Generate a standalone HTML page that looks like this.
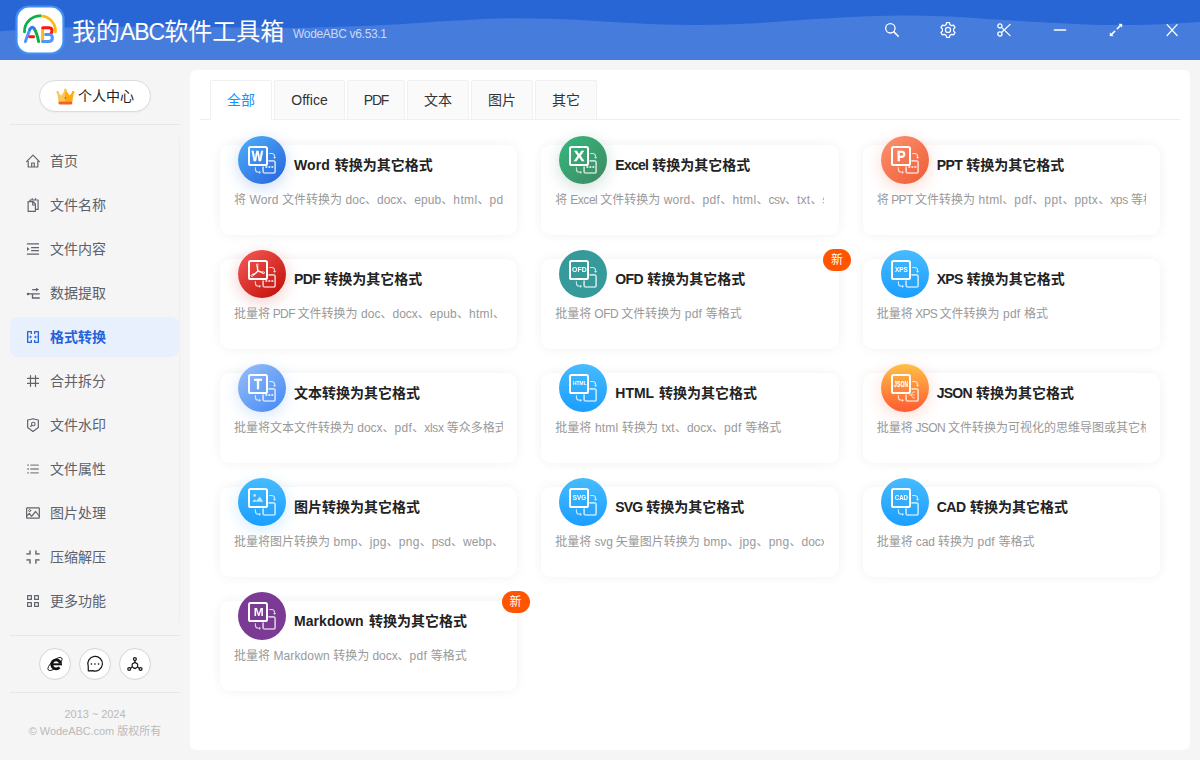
<!DOCTYPE html>
<html lang="zh-CN">
<head>
<meta charset="utf-8">
<title>我的ABC软件工具箱</title>
<style>
*{box-sizing:border-box;margin:0;padding:0}
html,body{width:1200px;height:760px;overflow:hidden}
body{background:#f5f5f5;font-family:"Liberation Sans","Noto Sans CJK SC",sans-serif;font-size:14px;color:#333;position:relative;-webkit-font-smoothing:antialiased}
a{color:inherit;text-decoration:none}
ul{list-style:none}
.hd{position:absolute;left:0;top:0;width:1200px;height:60px;background:#2866d6;overflow:hidden}
.hd .wave{position:absolute;left:0;top:0;width:1200px;height:60px}
.logo{position:absolute;left:0;top:0;width:80px;height:60px}
.logo svg{position:absolute;left:0;top:0;width:80px;height:60px}
.ttl{position:absolute;left:72px;top:13px;height:38px;line-height:38px;font-size:24px;color:#fff;white-space:nowrap}
.ttl b{font-weight:400;font-size:23px;letter-spacing:-1.05px}
.ver{position:absolute;left:293px;top:25px;height:18px;line-height:18px;font-size:12px;color:rgba(255,255,255,.72);white-space:nowrap}
.hb{position:absolute;top:14px;width:32px;height:32px;display:block}
.hb svg{position:absolute;left:8px;top:8px;width:16px;height:16px}
.sb{position:absolute;left:0;top:60px;width:190px;height:700px}
.uc{position:absolute;left:39px;top:20px;width:112px;height:32px;border:1px solid #dcdcdc;border-radius:16px;background:#fff;box-shadow:0 1px 2px rgba(0,0,0,.04)}
.uc svg{position:absolute;left:16px;top:7px;width:19px;height:18px}
.uc span{position:absolute;left:38px;top:0;height:30px;line-height:30px;font-size:14px;color:#222;white-space:nowrap}
.ln{position:absolute;left:10px;width:170px;height:1px;background:#e6e6e6}
.vl{position:absolute;left:179px;top:77px;width:1px;height:486px;background:#efefef}
.nav{position:absolute;left:10px;top:81px;width:169px}
.nav li{position:relative;height:40px;margin-bottom:4px;border-radius:8px;color:#5d6169;font-size:14px;line-height:40px;white-space:nowrap}
.nav li svg{position:absolute;left:15px;top:12px;width:16px;height:16px}
.nav li span{position:absolute;left:40px;top:0}
.nav li.on{background:#e8f0fe;color:#2562d6;font-weight:700}
.rb{position:absolute;top:588px;width:32px;height:32px;border-radius:50%;background:#fff;border:1px solid #d4d4d4}
.rb svg{position:absolute;left:-1px;top:-1px;width:32px;height:32px}
.cp{position:absolute;left:0;width:190px;text-align:center;font-size:11px;line-height:17px;height:17px;color:#bababa;white-space:nowrap}
.pn{position:absolute;left:190px;top:70px;width:1000px;height:680px;background:#fff;border-radius:6px}
.tabs{position:absolute;left:10px;top:10px;width:980px;height:40px;border-bottom:1px solid #efefef}
.tab{position:absolute;top:0;height:40px;line-height:38px;text-align:center;font-size:14px;color:#333;background:#fafafa;border:1px solid #f0f0f0;border-radius:2px 2px 0 0;white-space:nowrap}
.tab.on{background:#fff;color:#1890ff;border-bottom-color:#fff}
.card{position:absolute;width:297.333px;height:90px;background:#fff;border-radius:10px;box-shadow:0 0 12px rgba(0,0,0,.06)}
.ic{position:absolute;left:18px;top:-9px;width:48px;height:48px;border-radius:50%}
.ic svg{position:absolute;left:0;top:0;width:48px;height:48px;overflow:visible;will-change:transform}
.ic svg text{font-family:"Liberation Sans",sans-serif;font-weight:700;fill:#fff;text-anchor:middle;stroke:#fff}
.ct{position:absolute;left:74px;top:9px;height:22px;line-height:22px;font-size:14px;font-weight:700;color:#222;white-space:nowrap}
.cd{position:absolute;left:14px;top:45px;width:269px;height:20px;line-height:20px;font-size:12px;color:#999;white-space:nowrap;overflow:hidden}
.bdg{position:absolute;right:-12.3px;top:-10px;width:28px;height:22px;line-height:23px;border-radius:11px;background:#ff5500;color:#fff;font-size:12px;text-align:center}
</style>
</head>
<body>
<div class="hd"><svg class="wave" viewBox="0 0 1200 60" preserveAspectRatio="none"><path d="M0.0 31.2 C6.7 30.8 26.7 29.7 40.0 29.0 C53.3 28.3 61.7 27.4 80.0 27.0 C98.3 26.6 126.7 26.8 150.0 26.8 C173.3 26.9 196.7 27.1 220.0 27.3 C243.3 27.5 270.0 28.1 290.0 28.0 C310.0 27.9 321.7 27.4 340.0 26.8 C358.3 26.2 381.7 25.2 400.0 24.2 C418.3 23.2 433.3 21.8 450.0 20.8 C466.7 19.8 483.3 18.7 500.0 18.4 C516.7 18.1 533.3 18.3 550.0 18.8 C566.7 19.3 583.3 20.4 600.0 21.3 C616.7 22.2 633.3 23.4 650.0 24.0 C666.7 24.6 683.3 25.1 700.0 25.0 C716.7 24.9 733.3 24.3 750.0 23.5 C766.7 22.7 783.3 21.1 800.0 20.0 C816.7 18.9 833.3 17.8 850.0 17.0 C866.7 16.2 883.3 15.6 900.0 15.5 C916.7 15.4 933.3 15.8 950.0 16.5 C966.7 17.2 983.3 18.8 1000.0 19.8 C1016.7 20.9 1033.3 22.0 1050.0 22.8 C1066.7 23.6 1083.3 24.6 1100.0 24.9 C1116.7 25.2 1133.3 25.2 1150.0 24.7 C1166.7 24.2 1191.7 22.4 1200.0 22.0 L1200 60 L0 60 Z" fill="#467cdb"/></svg>
<div class="logo"><svg viewBox="0 0 80 60" fill="none" stroke-linecap="round" stroke-linejoin="round">
<rect x="15.4" y="5.4" width="49.2" height="49.2" rx="13.5" fill="#3f8ff5"/>
<rect x="17.6" y="7.6" width="44.8" height="44.8" rx="11.5" fill="#fff"/>
<path d="M41 15.85 A15.5 15.5 0 0 1 55.5 31.8" stroke="#ffba12" stroke-width="2.8"/>
<path d="M24.5 31.8 A15.5 15.5 0 0 1 41 15.85" stroke="#0eb04a" stroke-width="2.8" stroke-linecap="butt"/><path d="M24.5 31.8 v.1" stroke="#0eb04a" stroke-width="2.8"/>
<path d="M38.6 41.6 Q37 33 34.2 28.6" stroke="#0eb04a" stroke-width="3"/>
<path d="M25.4 41.6 L29.8 29.4" stroke="#4d95fa" stroke-width="3"/>
<path d="M29.8 29.4 Q32 25.4 34.2 28.6" stroke="#2f7cf0" stroke-width="3"/>
<path d="M29.8 36.8 L33.6 36.8" stroke="#fb1613" stroke-width="3"/>
<path d="M42.6 28.4 L42.6 41.4" stroke="#ffba12" stroke-width="3"/>
<path d="M42.8 27.7 H48.6 Q52 27.7 52 30.6 Q52 32.4 51 33.4" stroke="#fb1613" stroke-width="3"/>
<path d="M45.6 34.4 H49.4 Q52.4 34.8 52.4 37.8 Q52.4 41.5 48.4 41.5 H42.8" stroke="#4d95fa" stroke-width="3"/>
</svg></div>
<div class="ttl">我的<b>ABC</b>软件工具箱</div><div class="ver"><span style="letter-spacing:-0.319px">WodeABC v6.53.1</span></div>
<a class="hb" style="left:876px"><svg viewBox="0 0 16 16"><circle cx="6.35" cy="6.3" r="4.7" fill="none" stroke="#fff" stroke-width="1.3"/><path d="M9.9 9.9 L14.3 14.3" stroke="#fff" stroke-width="1.5" stroke-linecap="round"/></svg></a><a class="hb" style="left:932px"><svg viewBox="0 0 16 16"><path d="M6.14 2.61 L6.58 0.69 L9.42 0.69 L9.86 2.61 L11.74 3.70 L13.62 3.11 L15.04 5.57 L13.60 6.91 L13.60 9.09 L15.04 10.43 L13.62 12.89 L11.74 12.30 L9.86 13.39 L9.42 15.31 L6.58 15.31 L6.14 13.39 L4.26 12.30 L2.38 12.89 L0.96 10.43 L2.40 9.09 L2.40 6.91 L0.96 5.57 L2.38 3.11 L4.26 3.70 Z" fill="none" stroke="#fff" stroke-width="1.25" stroke-linejoin="round"/><circle cx="8" cy="7.9" r="2.55" fill="none" stroke="#fff" stroke-width="1.2"/></svg></a><a class="hb" style="left:988px"><svg viewBox="0 0 16 16"><circle cx="3.9" cy="3.9" r="2.1" fill="none" stroke="#fff" stroke-width="1.3"/><circle cx="3.9" cy="12" r="2.1" fill="none" stroke="#fff" stroke-width="1.3"/><path d="M5.5 5.4 L14.1 13.6 M5.5 10.5 L14.1 2.4" stroke="#fff" stroke-width="1.3" stroke-linecap="round"/></svg></a><a class="hb" style="left:1044px"><svg viewBox="0 0 16 16"><path d="M2.5 8 H13.5" stroke="#fff" stroke-width="1.7" stroke-linecap="round"/></svg></a><a class="hb" style="left:1100px"><svg viewBox="0 0 16 16"><path d="M9.3 6.7 L12.6 3.4 M6.7 9.3 L3.4 12.6" stroke="#fff" stroke-width="1.6" stroke-linecap="round"/><path d="M10.8 2 H14 V5.2 Z M2 10.8 V14 H5.2 Z" fill="#fff" stroke="#fff" stroke-width=".4" stroke-linejoin="round"/></svg></a><a class="hb" style="left:1156px"><svg viewBox="0 0 16 16"><path d="M3.1 2.6 L13.1 13.5 M13.1 2.6 L3.1 13.5" stroke="#fff" stroke-width="1.25" stroke-linecap="round"/></svg></a></div>
<div class="sb">
<div class="uc"><svg viewBox="0 0 19 18"><path d="M1.6 4.4 L5.4 8 L9.4 2.2 L13.4 8 L17.2 4.4 L16 13.2 H2.8 Z" fill="#fdc55a" stroke="#fdc55a" stroke-width=".8" stroke-linejoin="round"/><path d="M9.4 2.2 L13.4 8 L17.2 4.4 L16 13.2 H9.4 Z" fill="#fcab18" stroke="#fcab18" stroke-width=".8" stroke-linejoin="round"/><circle cx="1.7" cy="4.3" r="1.3" fill="#fdc55a"/><circle cx="9.4" cy="2" r="1.5" fill="#fdc55a"/><circle cx="17.1" cy="4.3" r="1.3" fill="#fcab18"/><path d="M2.6 13.6 H16.2 V15.2 Q16.2 16.6 14.8 16.6 H4 Q2.6 16.6 2.6 15.2 Z" fill="#f4641c"/><circle cx="9.4" cy="9.9" r=".8" fill="#f0442a"/></svg><span>个人中心</span></div>
<div class="ln" style="top:64px"></div>
<div class="vl"></div>
<ul class="nav">
<li><svg style="color:#60646c" viewBox="0 0 16 16" fill="none" stroke="currentColor" stroke-width="1.2" stroke-linejoin="round" stroke-linecap="round"><path d="M1.6 8.6 L8 2.2 L14.4 8.6 M3.2 8.4 V14 H12.8 V8.4 M6.7 14 V10 H9.3 V14"/></svg><span>首页</span></li>
<li><svg style="color:#60646c" viewBox="0 0 16 16" fill="none" stroke="currentColor" stroke-width="1.2" stroke-linejoin="round" stroke-linecap="round"><path d="M3.1 4.7 H8.2 L10.4 7 V14.3 H3.1 Z M7.7 4.9 V8 H10.2 M5 4.4 V3 H13.1 V12.4 H10.7 M7.2 1.7 V3 M10.4 1.7 V3"/></svg><span>文件名称</span></li>
<li><svg style="color:#60646c" viewBox="0 0 16 16" fill="none" stroke="currentColor" stroke-width="1.25"><path d="M1.9 2.95 H14 M6.1 6.5 H14 M6.1 9.55 H14 M1.9 13 H14"/><path d="M2 5.9 L4.5 8 L2 10.1 Z" fill="currentColor" stroke="none"/></svg><span>文件内容</span></li>
<li><svg style="color:#60646c" viewBox="0 0 16 16" fill="none" stroke="currentColor" stroke-width="1.3"><path d="M7.2 4.6 H11.4 M3 8.9 H14.8 M7.5 8.9 V13 H14.8"/><path d="M11 2.7 L14 4.6 L11 6.5 Z" fill="currentColor" stroke="none"/><circle cx="3" cy="8.9" r="1.25" fill="currentColor" stroke="none"/></svg><span>数据提取</span></li>
<li class="on"><svg style="color:#2465d8" viewBox="0 0 16 16" fill="none" stroke="currentColor" stroke-width="1.35" stroke-linejoin="round"><path d="M6.35 4.9 V2.65 H2.65 V13.35 H6.35 V11.1 M9.65 4.9 V2.65 H13.35 V13.35 H9.65 V11.1"/><path d="M3.2 7.95 H5.4 M10.6 7.95 H12.8" stroke-width="1.1" stroke-opacity=".75"/><path d="M5.1 6.3 L7 7.95 L5.1 9.6 Z M10.9 6.3 L9 7.95 L10.9 9.6 Z" fill="currentColor" stroke="none"/></svg><span>格式转换</span></li>
<li><svg style="color:#60646c" viewBox="0 0 16 16" fill="none" stroke="currentColor" stroke-width="1.2" stroke-linejoin="round" stroke-linecap="round"><path d="M5.5 2.5 V13.4 M10.5 2.5 V13.4 M2.5 5.45 H13.5 M2.5 10.45 H13.5"/></svg><span>合并拆分</span></li>
<li><svg style="color:#60646c" viewBox="0 0 16 16" fill="none" stroke="currentColor" stroke-width="1.2" stroke-linejoin="round" stroke-linecap="round"><path d="M2.65 3 Q5.5 2.5 8 1.7 Q10.5 2.5 13.35 3 V10.6 L8 14.4 L2.65 10.6 Z"/><circle cx="8.3" cy="7" r="1.8" stroke-width="1.1"/><path d="M7 8.3 L5.5 9.5" stroke-width="1.1"/></svg><span>文件水印</span></li>
<li><svg style="color:#60646c" viewBox="0 0 16 16" fill="none" stroke="#85888e" stroke-width="1.4"><path d="M5.3 4.1 H13.8 M5.3 8 H13.8 M5.3 11.9 H13.8 M2.2 4.1 H4 M2.2 8 H4 M2.2 11.9 H4"/></svg><span>文件属性</span></li>
<li><svg style="color:#60646c" viewBox="0 0 16 16" fill="none" stroke="currentColor" stroke-width="1.2" stroke-linejoin="round" stroke-linecap="round"><rect x="1.6" y="2.8" width="12.7" height="10.4" rx=".5"/><path d="M1.9 10.9 L4.3 8.4 L6.6 11.3 L10.6 6.5 L14.1 11"/><circle cx="4.7" cy="5.6" r="1" stroke-width="1"/></svg><span>图片处理</span></li>
<li><svg style="color:#60646c" viewBox="0 0 16 16" fill="none" stroke="#7c7f86" stroke-width="1.8" stroke-linecap="round" stroke-linejoin="round"><path d="M2.1 4.9 H5 V2.1 M10.9 2.1 V4.9 H13.9 M2.1 10.9 H5 V13.9 M10.9 13.9 V10.9 H13.9"/></svg><span>压缩解压</span></li>
<li><svg style="color:#60646c" viewBox="0 0 16 16" fill="none" stroke="currentColor" stroke-width="1.2" stroke-linejoin="round"><rect x="2.6" y="2.6" width="3.8" height="3.8"/><rect x="9.6" y="2.6" width="3.8" height="3.8"/><rect x="2.6" y="9.6" width="3.8" height="3.8"/><rect x="9.6" y="9.6" width="3.8" height="3.8"/></svg><span>更多功能</span></li>
</ul>
<div class="ln" style="top:575px"></div>
<a class="rb" style="left:39px"><svg viewBox="0 0 32 32"><ellipse cx="16" cy="16" rx="9" ry="3.5" fill="none" stroke="#1a1a1a" stroke-width=".9" transform="rotate(-42 16 16)"/><circle cx="17.1" cy="16" r="5.2" fill="#fff"/><path d="M20.5 19.4 A4.5 4.5 0 1 1 21.6 15.6" fill="none" stroke="#111" stroke-width="2.9"/><path d="M12.8 16.3 H23" stroke="#111" stroke-width="2"/></svg></a><a class="rb" style="left:79px"><svg viewBox="0 0 32 32"><path d="M9.24 18.2 A7.3 7.3 0 1 1 13.6 22.56 L9.3 22.8 Z" fill="none" stroke="#1a1a1a" stroke-width="1.25" stroke-linejoin="round"/><path d="M11.8 16 h1.3 M15.3 16 h1.3 M18.9 16 h1.3" stroke="#1a1a1a" stroke-width="1.5"/></svg></a><a class="rb" style="left:119px"><svg viewBox="0 0 32 32" fill="none" stroke="#1a1a1a" stroke-width="1.25"><path d="M15.9 14.4 L18.6 15.95 V19.05 L15.9 20.6 L13.2 19.05 V15.95 Z" stroke-linejoin="round"/><circle cx="15.9" cy="11.1" r="1.45"/><circle cx="10.2" cy="21" r="1.45"/><circle cx="21.6" cy="21" r="1.45"/><path d="M15.9 12.6 V14.3 M13.1 19.2 L11.5 20.2 M18.7 19.2 L20.3 20.2"/></svg></a>
<div class="ln" style="top:632px"></div>
<div class="cp" style="top:646px"><span style="letter-spacing:-0.045px">2013 ~ 2024</span></div>
<div class="cp" style="top:663px"><span style="letter-spacing:-0.057px">© WodeABC.com </span>版权所有</div>
</div>
<div class="pn">
<div class="tabs">
<div class="tab on" style="left:10px;width:62px">全部</div><div class="tab" style="left:74px;width:71px"><span style="letter-spacing:0.032px">Office</span></div><div class="tab" style="left:147px;width:58px"><span style="letter-spacing:-1.169px">PDF</span></div><div class="tab" style="left:207px;width:62px">文本</div><div class="tab" style="left:271px;width:62px">图片</div><div class="tab" style="left:335px;width:62px">其它</div>
</div>
<div class="card" style="left:30px;top:75px"><div class="ic" style="box-shadow:0 4px 16px rgba(42,107,224,.24)"><svg viewBox="0 0 48 48"><defs><linearGradient id="g0" x1="0.15" y1="0.1" x2="0.85" y2="0.9"><stop offset="0" stop-color="#4aa6f5"/><stop offset="1" stop-color="#2a6be0"/></linearGradient></defs><circle cx="24" cy="24" r="24" fill="url(#g0)"/><path d="M30.4 24.9 H35.5 a1.6 1.6 0 0 1 1.6 1.6 V35.4 a1.6 1.6 0 0 1 -1.6 1.6 H26.7 a1.6 1.6 0 0 1 -1.6 -1.6 V30.4" fill="none" stroke="#fff" stroke-opacity=".7" stroke-width="1.7"/><path d="M27.4 31 h1.9 M30.4 31 h1.9 M33.4 31 h1.9" stroke="#fff" stroke-opacity=".75" stroke-width="2.2"/><path d="M31.2 17.5 h2.4 q3 0 3 3 v1" fill="none" stroke="#fff" stroke-opacity=".75" stroke-width="1.1"/><path d="M34.9 21.2 h3.4 l-1.7 1.6 z" fill="#fff" fill-opacity=".85"/><path d="M17.4 31.2 v2 q0 3 3 3 h1" fill="none" stroke="#fff" stroke-opacity=".75" stroke-width="1.1"/><path d="M21.2 34.7 v3.2 l1.7 -1.6 z" fill="#fff" fill-opacity=".85"/><rect x="11" y="11" width="18" height="18" rx="1.6" fill="none" stroke="#fff" stroke-width="2"/><text x="19.5" y="24.9" font-size="14" font-weight="700" textLength="11.3" lengthAdjust="spacingAndGlyphs" stroke-width="0.35">W</text></svg></div><div class="ct"><span style="letter-spacing:0.100px">Word</span><span style="letter-spacing:1.000px"> </span>转换为其它格式</div><div class="cd">将<span style="letter-spacing:0.152px"> Word </span>文件转换为<span style="letter-spacing:0.060px"> doc</span>、<span style="letter-spacing:-0.053px">docx</span>、<span style="letter-spacing:0.118px">epub</span>、<span style="letter-spacing:0.353px">html</span>、<span style="letter-spacing:0.287px">pdf </span>等格式</div></div>
<div class="card" style="left:351.333px;top:75px"><div class="ic" style="box-shadow:0 4px 16px rgba(40,120,80,.22)"><svg viewBox="0 0 48 48"><defs><linearGradient id="g1" x1="0.15" y1="0.1" x2="0.85" y2="0.9"><stop offset="0" stop-color="#36b37a"/><stop offset="1" stop-color="#3d8e66"/></linearGradient></defs><circle cx="24" cy="24" r="24" fill="url(#g1)"/><path d="M30.4 24.9 H35.5 a1.6 1.6 0 0 1 1.6 1.6 V35.4 a1.6 1.6 0 0 1 -1.6 1.6 H26.7 a1.6 1.6 0 0 1 -1.6 -1.6 V30.4" fill="none" stroke="#fff" stroke-opacity=".7" stroke-width="1.7"/><path d="M27.4 31 h1.9 M30.4 31 h1.9 M33.4 31 h1.9" stroke="#fff" stroke-opacity=".75" stroke-width="2.2"/><path d="M31.2 17.5 h2.4 q3 0 3 3 v1" fill="none" stroke="#fff" stroke-opacity=".75" stroke-width="1.1"/><path d="M34.9 21.2 h3.4 l-1.7 1.6 z" fill="#fff" fill-opacity=".85"/><path d="M17.4 31.2 v2 q0 3 3 3 h1" fill="none" stroke="#fff" stroke-opacity=".75" stroke-width="1.1"/><path d="M21.2 34.7 v3.2 l1.7 -1.6 z" fill="#fff" fill-opacity=".85"/><rect x="11" y="11" width="18" height="18" rx="1.6" fill="none" stroke="#fff" stroke-width="2"/><text x="20" y="24.9" font-size="14" font-weight="700" textLength="10.2" lengthAdjust="spacingAndGlyphs" stroke-width="0.35">X</text></svg></div><div class="ct"><span style="letter-spacing:-0.767px">Excel</span><span style="letter-spacing:0.233px"> </span>转换为其它格式</div><div class="cd">将<span style="letter-spacing:-0.448px"> Excel </span>文件转换为<span style="letter-spacing:0.175px"> word</span>、<span style="letter-spacing:0.396px">pdf</span>、<span style="letter-spacing:0.353px">html</span>、<span style="letter-spacing:-0.539px">csv</span>、<span style="letter-spacing:0.323px">txt</span>、<span style="letter-spacing:-0.206px">svg </span>等格式</div></div>
<div class="card" style="left:672.667px;top:75px"><div class="ic" style="box-shadow:0 4px 16px rgba(240,98,58,.24)"><svg viewBox="0 0 48 48"><defs><linearGradient id="g2" x1="0.15" y1="0.1" x2="0.85" y2="0.9"><stop offset="0" stop-color="#fb8c6a"/><stop offset="1" stop-color="#f0623a"/></linearGradient></defs><circle cx="24" cy="24" r="24" fill="url(#g2)"/><path d="M30.4 24.9 H35.5 a1.6 1.6 0 0 1 1.6 1.6 V35.4 a1.6 1.6 0 0 1 -1.6 1.6 H26.7 a1.6 1.6 0 0 1 -1.6 -1.6 V30.4" fill="none" stroke="#fff" stroke-opacity=".7" stroke-width="1.7"/><path d="M27.4 31 h1.9 M30.4 31 h1.9 M33.4 31 h1.9" stroke="#fff" stroke-opacity=".75" stroke-width="2.2"/><path d="M31.2 17.5 h2.4 q3 0 3 3 v1" fill="none" stroke="#fff" stroke-opacity=".75" stroke-width="1.1"/><path d="M34.9 21.2 h3.4 l-1.7 1.6 z" fill="#fff" fill-opacity=".85"/><path d="M17.4 31.2 v2 q0 3 3 3 h1" fill="none" stroke="#fff" stroke-opacity=".75" stroke-width="1.1"/><path d="M21.2 34.7 v3.2 l1.7 -1.6 z" fill="#fff" fill-opacity=".85"/><rect x="11" y="11" width="18" height="18" rx="1.6" fill="none" stroke="#fff" stroke-width="2"/><text x="20.2" y="24.9" font-size="14" font-weight="700" textLength="8.6" lengthAdjust="spacingAndGlyphs" stroke-width="0.35">P</text></svg></div><div class="ct"><span style="letter-spacing:-0.570px">PPT</span><span style="letter-spacing:0.230px"> </span>转换为其它格式</div><div class="cd">将<span style="letter-spacing:-0.699px"> PPT </span>文件转换为<span style="letter-spacing:0.271px"> html</span>、<span style="letter-spacing:0.396px">pdf</span>、<span style="letter-spacing:0.496px">ppt</span>、<span style="letter-spacing:0.249px">pptx</span>、<span style="letter-spacing:-0.269px">xps </span>等格式</div></div>
<div class="card" style="left:30px;top:189px"><div class="ic" style="box-shadow:0 4px 16px rgba(196,21,15,.22)"><svg viewBox="0 0 48 48"><defs><linearGradient id="g3" x1="0.15" y1="0.1" x2="0.85" y2="0.9"><stop offset="0" stop-color="#f0524e"/><stop offset="1" stop-color="#c4150f"/></linearGradient></defs><circle cx="24" cy="24" r="24" fill="url(#g3)"/><path d="M30.4 24.9 H35.5 a1.6 1.6 0 0 1 1.6 1.6 V35.4 a1.6 1.6 0 0 1 -1.6 1.6 H26.7 a1.6 1.6 0 0 1 -1.6 -1.6 V30.4" fill="none" stroke="#fff" stroke-opacity=".7" stroke-width="1.7"/><path d="M27.4 31 h1.9 M30.4 31 h1.9 M33.4 31 h1.9" stroke="#fff" stroke-opacity=".75" stroke-width="2.2"/><path d="M31.2 17.5 h2.4 q3 0 3 3 v1" fill="none" stroke="#fff" stroke-opacity=".75" stroke-width="1.1"/><path d="M34.9 21.2 h3.4 l-1.7 1.6 z" fill="#fff" fill-opacity=".85"/><path d="M17.4 31.2 v2 q0 3 3 3 h1" fill="none" stroke="#fff" stroke-opacity=".75" stroke-width="1.1"/><path d="M21.2 34.7 v3.2 l1.7 -1.6 z" fill="#fff" fill-opacity=".85"/><rect x="11" y="11" width="18" height="18" rx="1.6" fill="none" stroke="#fff" stroke-width="2"/><path d="M19.35 16.9 Q19.6 19.4 19.95 21 Q17.4 23.7 15.7 24.5 M19.95 21 Q22.6 21.7 23.9 22.4" fill="none" stroke="#fff" stroke-width="1.4" stroke-linecap="round"/><ellipse cx="19.25" cy="15.3" rx=".75" ry="1.6" fill="none" stroke="#fff" stroke-width=".8"/><ellipse cx="14.5" cy="25.2" rx="1.6" ry=".9" transform="rotate(-35 14.5 25.2)" fill="none" stroke="#fff" stroke-width=".8"/><ellipse cx="25.2" cy="22.7" rx="1.5" ry=".8" transform="rotate(12 25.2 22.7)" fill="none" stroke="#fff" stroke-width=".8"/></svg></div><div class="ct"><span style="letter-spacing:-0.605px">PDF</span><span style="letter-spacing:0.195px"> </span>转换为其它格式</div><div class="cd">批量将<span style="letter-spacing:-0.621px"> PDF </span>文件转换为<span style="letter-spacing:0.060px"> doc</span>、<span style="letter-spacing:-0.053px">docx</span>、<span style="letter-spacing:0.118px">epub</span>、<span style="letter-spacing:0.353px">html</span>、<span style="letter-spacing:0.228px">txt </span>等格式</div></div>
<div class="card" style="left:351.333px;top:189px"><div class="ic" style="box-shadow:none"><svg viewBox="0 0 48 48"><defs><linearGradient id="g4" x1="0" y1="0" x2="0" y2="1"><stop offset="0" stop-color="#379a9a"/><stop offset="1" stop-color="#379a9a"/></linearGradient></defs><circle cx="24" cy="24" r="24" fill="url(#g4)"/><path d="M30.4 24.9 H35.5 a1.6 1.6 0 0 1 1.6 1.6 V35.4 a1.6 1.6 0 0 1 -1.6 1.6 H26.7 a1.6 1.6 0 0 1 -1.6 -1.6 V30.4" fill="none" stroke="#fff" stroke-opacity=".7" stroke-width="1.7"/><path d="M31.2 17.5 h2.4 q3 0 3 3 v1" fill="none" stroke="#fff" stroke-opacity=".75" stroke-width="1.1"/><path d="M34.9 21.2 h3.4 l-1.7 1.6 z" fill="#fff" fill-opacity=".85"/><path d="M17.4 31.2 v2 q0 3 3 3 h1" fill="none" stroke="#fff" stroke-opacity=".75" stroke-width="1.1"/><path d="M21.2 34.7 v3.2 l1.7 -1.6 z" fill="#fff" fill-opacity=".85"/><rect x="11" y="11" width="18" height="18" rx="1.6" fill="none" stroke="#fff" stroke-width="2"/><text x="20.4" y="22" font-size="8" font-weight="400" textLength="14.6" lengthAdjust="spacingAndGlyphs" stroke-width="0">OFD</text></svg></div><div class="ct"><span style="letter-spacing:-0.605px">OFD</span><span style="letter-spacing:0.195px"> </span>转换为其它格式</div><div class="cd">批量将<span style="letter-spacing:-0.421px"> OFD </span>文件转换为<span style="letter-spacing:0.218px"> pdf </span>等格式</div><div class="bdg">新</div></div>
<div class="card" style="left:672.667px;top:189px"><div class="ic" style="box-shadow:none"><svg viewBox="0 0 48 48"><defs><linearGradient id="g5" x1="0" y1="0" x2="0" y2="1"><stop offset="0" stop-color="#47bbff"/><stop offset="1" stop-color="#1a9eff"/></linearGradient></defs><circle cx="24" cy="24" r="24" fill="url(#g5)"/><path d="M30.4 24.9 H35.5 a1.6 1.6 0 0 1 1.6 1.6 V35.4 a1.6 1.6 0 0 1 -1.6 1.6 H26.7 a1.6 1.6 0 0 1 -1.6 -1.6 V30.4" fill="none" stroke="#fff" stroke-opacity=".7" stroke-width="1.7"/><path d="M31.2 17.5 h2.4 q3 0 3 3 v1" fill="none" stroke="#fff" stroke-opacity=".75" stroke-width="1.1"/><path d="M34.9 21.2 h3.4 l-1.7 1.6 z" fill="#fff" fill-opacity=".85"/><path d="M17.4 31.2 v2 q0 3 3 3 h1" fill="none" stroke="#fff" stroke-opacity=".75" stroke-width="1.1"/><path d="M21.2 34.7 v3.2 l1.7 -1.6 z" fill="#fff" fill-opacity=".85"/><rect x="11" y="11" width="18" height="18" rx="1.6" fill="none" stroke="#fff" stroke-width="2"/><text x="20.4" y="22" font-size="8" font-weight="400" textLength="13" lengthAdjust="spacingAndGlyphs" stroke-width="0">XPS</text></svg></div><div class="ct"><span style="letter-spacing:-0.670px">XPS</span><span style="letter-spacing:0.130px"> </span>转换为其它格式</div><div class="cd">批量将<span style="letter-spacing:-0.789px"> XPS </span>文件转换为<span style="letter-spacing:0.218px"> pdf </span>格式</div></div>
<div class="card" style="left:30px;top:303px"><div class="ic" style="box-shadow:0 4px 16px rgba(77,143,245,.22)"><svg viewBox="0 0 48 48"><defs><linearGradient id="g6" x1="0.15" y1="0.1" x2="0.85" y2="0.9"><stop offset="0" stop-color="#8db8f8"/><stop offset="1" stop-color="#4d8ff5"/></linearGradient></defs><circle cx="24" cy="24" r="24" fill="url(#g6)"/><path d="M30.4 24.9 H35.5 a1.6 1.6 0 0 1 1.6 1.6 V35.4 a1.6 1.6 0 0 1 -1.6 1.6 H26.7 a1.6 1.6 0 0 1 -1.6 -1.6 V30.4" fill="none" stroke="#fff" stroke-opacity=".7" stroke-width="1.7"/><path d="M27.4 31 h1.9 M30.4 31 h1.9 M33.4 31 h1.9" stroke="#fff" stroke-opacity=".75" stroke-width="2.2"/><path d="M31.2 17.5 h2.4 q3 0 3 3 v1" fill="none" stroke="#fff" stroke-opacity=".75" stroke-width="1.1"/><path d="M34.9 21.2 h3.4 l-1.7 1.6 z" fill="#fff" fill-opacity=".85"/><path d="M17.4 31.2 v2 q0 3 3 3 h1" fill="none" stroke="#fff" stroke-opacity=".75" stroke-width="1.1"/><path d="M21.2 34.7 v3.2 l1.7 -1.6 z" fill="#fff" fill-opacity=".85"/><rect x="11" y="11" width="18" height="18" rx="1.6" fill="none" stroke="#fff" stroke-width="2"/><text x="20" y="25" font-size="14" font-weight="700" textLength="8" lengthAdjust="spacingAndGlyphs" stroke-width="0.35">T</text></svg></div><div class="ct">文本转换为其它格式</div><div class="cd">批量将文本文件转换为<span style="letter-spacing:-0.050px"> docx</span>、<span style="letter-spacing:0.396px">pdf</span>、<span style="letter-spacing:-0.340px">xlsx </span>等众多格式</div></div>
<div class="card" style="left:351.333px;top:303px"><div class="ic" style="box-shadow:none"><svg viewBox="0 0 48 48"><defs><linearGradient id="g7" x1="0" y1="0" x2="0" y2="1"><stop offset="0" stop-color="#47bbff"/><stop offset="1" stop-color="#1a9eff"/></linearGradient></defs><circle cx="24" cy="24" r="24" fill="url(#g7)"/><path d="M30.4 24.9 H35.5 a1.6 1.6 0 0 1 1.6 1.6 V35.4 a1.6 1.6 0 0 1 -1.6 1.6 H26.7 a1.6 1.6 0 0 1 -1.6 -1.6 V30.4" fill="none" stroke="#fff" stroke-opacity=".7" stroke-width="1.7"/><path d="M31.2 17.5 h2.4 q3 0 3 3 v1" fill="none" stroke="#fff" stroke-opacity=".75" stroke-width="1.1"/><path d="M34.9 21.2 h3.4 l-1.7 1.6 z" fill="#fff" fill-opacity=".85"/><path d="M17.4 31.2 v2 q0 3 3 3 h1" fill="none" stroke="#fff" stroke-opacity=".75" stroke-width="1.1"/><path d="M21.2 34.7 v3.2 l1.7 -1.6 z" fill="#fff" fill-opacity=".85"/><rect x="11" y="11" width="18" height="18" rx="1.6" fill="none" stroke="#fff" stroke-width="2"/><text x="20.8" y="21" font-size="5.8" font-weight="700" textLength="13.8" lengthAdjust="spacingAndGlyphs" stroke-width="0">HTML</text></svg></div><div class="ct"><span style="letter-spacing:-0.016px">HTML</span><span style="letter-spacing:0.884px"> </span>转换为其它格式</div><div class="cd">批量将<span style="letter-spacing:0.219px"> html </span>转换为<span style="letter-spacing:0.228px"> txt</span>、<span style="letter-spacing:-0.053px">docx</span>、<span style="letter-spacing:0.287px">pdf </span>等格式</div></div>
<div class="card" style="left:672.667px;top:303px"><div class="ic" style="box-shadow:0 4px 16px rgba(255,100,50,.22)"><svg viewBox="0 0 48 48"><defs><linearGradient id="g8" x1="0" y1="0" x2="0" y2="1"><stop offset="0" stop-color="#ffbf47"/><stop offset="1" stop-color="#ff5a30"/></linearGradient></defs><circle cx="24" cy="24" r="24" fill="url(#g8)"/><path d="M30.4 24.9 H35.5 a1.6 1.6 0 0 1 1.6 1.6 V35.4 a1.6 1.6 0 0 1 -1.6 1.6 H26.7 a1.6 1.6 0 0 1 -1.6 -1.6 V30.4" fill="none" stroke="#fff" stroke-opacity=".7" stroke-width="1.7"/><path d="M28 31 h2 l2-3 h2 M30 31 l2 0 h2 M30 31 l2 3 h2" fill="none" stroke="#fff" stroke-opacity=".7" stroke-width=".9"/><path d="M31.2 17.5 h2.4 q3 0 3 3 v1" fill="none" stroke="#fff" stroke-opacity=".75" stroke-width="1.1"/><path d="M34.9 21.2 h3.4 l-1.7 1.6 z" fill="#fff" fill-opacity=".85"/><path d="M17.4 31.2 v2 q0 3 3 3 h1" fill="none" stroke="#fff" stroke-opacity=".75" stroke-width="1.1"/><path d="M21.2 34.7 v3.2 l1.7 -1.6 z" fill="#fff" fill-opacity=".85"/><rect x="11" y="11" width="18" height="18" rx="1.6" fill="none" stroke="#fff" stroke-width="2"/><text x="20.1" y="23" font-size="8.3" font-weight="400" textLength="14" lengthAdjust="spacingAndGlyphs" stroke-width="0.2">JSON</text></svg></div><div class="ct"><span style="letter-spacing:-0.704px">JSON</span><span style="letter-spacing:0.196px"> </span>转换为其它格式</div><div class="cd">批量将<span style="letter-spacing:-0.570px"> JSON </span>文件转换为可视化的思维导图或其它格式</div></div>
<div class="card" style="left:30px;top:417px"><div class="ic" style="box-shadow:0 4px 16px rgba(26,158,255,.2)"><svg viewBox="0 0 48 48"><defs><linearGradient id="g9" x1="0" y1="0" x2="0" y2="1"><stop offset="0" stop-color="#47bbff"/><stop offset="1" stop-color="#1a9eff"/></linearGradient></defs><circle cx="24" cy="24" r="24" fill="url(#g9)"/><path d="M30.4 24.9 H35.5 a1.6 1.6 0 0 1 1.6 1.6 V35.4 a1.6 1.6 0 0 1 -1.6 1.6 H26.7 a1.6 1.6 0 0 1 -1.6 -1.6 V30.4" fill="none" stroke="#fff" stroke-opacity=".7" stroke-width="1.7"/><path d="M31.2 17.5 h2.4 q3 0 3 3 v1" fill="none" stroke="#fff" stroke-opacity=".75" stroke-width="1.1"/><path d="M34.9 21.2 h3.4 l-1.7 1.6 z" fill="#fff" fill-opacity=".85"/><path d="M17.4 31.2 v2 q0 3 3 3 h1" fill="none" stroke="#fff" stroke-opacity=".75" stroke-width="1.1"/><path d="M21.2 34.7 v3.2 l1.7 -1.6 z" fill="#fff" fill-opacity=".85"/><rect x="11" y="11" width="18" height="18" rx="1.6" fill="none" stroke="#fff" stroke-width="2"/><circle cx="16.6" cy="17.4" r="1.3" fill="#fff" fill-opacity=".7"/><path d="M14 23.8 l2.6 -2.6 l1.8 1.6 l3.4 -4.4 l3.4 5.4 z" fill="#fff" fill-opacity=".7"/></svg></div><div class="ct">图片转换为其它格式</div><div class="cd">批量将图片转换为<span style="letter-spacing:0.258px"> bmp</span>、<span style="letter-spacing:0.337px">jpg</span>、<span style="letter-spacing:0.292px">png</span>、<span style="letter-spacing:-0.049px">psd</span>、<span style="letter-spacing:0.089px">webp</span>、<span style="letter-spacing:0.395px">tiff </span>等格式</div></div>
<div class="card" style="left:351.333px;top:417px"><div class="ic" style="box-shadow:none"><svg viewBox="0 0 48 48"><defs><linearGradient id="g10" x1="0" y1="0" x2="0" y2="1"><stop offset="0" stop-color="#47bbff"/><stop offset="1" stop-color="#1a9eff"/></linearGradient></defs><circle cx="24" cy="24" r="24" fill="url(#g10)"/><path d="M30.4 24.9 H35.5 a1.6 1.6 0 0 1 1.6 1.6 V35.4 a1.6 1.6 0 0 1 -1.6 1.6 H26.7 a1.6 1.6 0 0 1 -1.6 -1.6 V30.4" fill="none" stroke="#fff" stroke-opacity=".7" stroke-width="1.7"/><path d="M31.2 17.5 h2.4 q3 0 3 3 v1" fill="none" stroke="#fff" stroke-opacity=".75" stroke-width="1.1"/><path d="M34.9 21.2 h3.4 l-1.7 1.6 z" fill="#fff" fill-opacity=".85"/><path d="M17.4 31.2 v2 q0 3 3 3 h1" fill="none" stroke="#fff" stroke-opacity=".75" stroke-width="1.1"/><path d="M21.2 34.7 v3.2 l1.7 -1.6 z" fill="#fff" fill-opacity=".85"/><rect x="11" y="11" width="18" height="18" rx="1.6" fill="none" stroke="#fff" stroke-width="2"/><text x="20.4" y="22" font-size="8" font-weight="400" textLength="13.4" lengthAdjust="spacingAndGlyphs" stroke-width="0">SVG</text></svg></div><div class="ct"><span style="letter-spacing:-0.820px">SVG</span><span style="letter-spacing:-0.020px"> </span>转换为其它格式</div><div class="cd">批量将<span style="letter-spacing:-0.173px"> svg </span>矢量图片转换为<span style="letter-spacing:0.258px"> bmp</span>、<span style="letter-spacing:0.337px">jpg</span>、<span style="letter-spacing:0.292px">png</span>、<span style="letter-spacing:-0.050px">docx </span>等格式</div></div>
<div class="card" style="left:672.667px;top:417px"><div class="ic" style="box-shadow:none"><svg viewBox="0 0 48 48"><defs><linearGradient id="g11" x1="0" y1="0" x2="0" y2="1"><stop offset="0" stop-color="#47bbff"/><stop offset="1" stop-color="#1a9eff"/></linearGradient></defs><circle cx="24" cy="24" r="24" fill="url(#g11)"/><path d="M30.4 24.9 H35.5 a1.6 1.6 0 0 1 1.6 1.6 V35.4 a1.6 1.6 0 0 1 -1.6 1.6 H26.7 a1.6 1.6 0 0 1 -1.6 -1.6 V30.4" fill="none" stroke="#fff" stroke-opacity=".7" stroke-width="1.7"/><path d="M31.2 17.5 h2.4 q3 0 3 3 v1" fill="none" stroke="#fff" stroke-opacity=".75" stroke-width="1.1"/><path d="M34.9 21.2 h3.4 l-1.7 1.6 z" fill="#fff" fill-opacity=".85"/><path d="M17.4 31.2 v2 q0 3 3 3 h1" fill="none" stroke="#fff" stroke-opacity=".75" stroke-width="1.1"/><path d="M21.2 34.7 v3.2 l1.7 -1.6 z" fill="#fff" fill-opacity=".85"/><rect x="11" y="11" width="18" height="18" rx="1.6" fill="none" stroke="#fff" stroke-width="2"/><text x="20.4" y="22" font-size="8" font-weight="400" textLength="13.4" lengthAdjust="spacingAndGlyphs" stroke-width="0">CAD</text></svg></div><div class="ct"><span style="letter-spacing:-0.425px">CAD</span><span style="letter-spacing:0.375px"> </span>转换为其它格式</div><div class="cd">批量将<span style="letter-spacing:-0.145px"> cad </span>转换为<span style="letter-spacing:0.218px"> pdf </span>等格式</div></div>
<div class="card" style="left:30px;top:531px"><div class="ic" style="box-shadow:none"><svg viewBox="0 0 48 48"><defs><linearGradient id="g12" x1="0" y1="0" x2="0" y2="1"><stop offset="0" stop-color="#7b3a93"/><stop offset="1" stop-color="#7b3a93"/></linearGradient></defs><circle cx="24" cy="24" r="24" fill="url(#g12)"/><path d="M30.4 24.9 H35.5 a1.6 1.6 0 0 1 1.6 1.6 V35.4 a1.6 1.6 0 0 1 -1.6 1.6 H26.7 a1.6 1.6 0 0 1 -1.6 -1.6 V30.4" fill="none" stroke="#fff" stroke-opacity=".7" stroke-width="1.7"/><path d="M31.2 17.5 h2.4 q3 0 3 3 v1" fill="none" stroke="#fff" stroke-opacity=".75" stroke-width="1.1"/><path d="M34.9 21.2 h3.4 l-1.7 1.6 z" fill="#fff" fill-opacity=".85"/><path d="M17.4 31.2 v2 q0 3 3 3 h1" fill="none" stroke="#fff" stroke-opacity=".75" stroke-width="1.1"/><path d="M21.2 34.7 v3.2 l1.7 -1.6 z" fill="#fff" fill-opacity=".85"/><rect x="11" y="11" width="18" height="18" rx="1.6" fill="none" stroke="#fff" stroke-width="2"/><text x="20.7" y="23.6" font-size="10.5" font-weight="400" textLength="10" lengthAdjust="spacingAndGlyphs" stroke-width="0">M</text></svg></div><div class="ct"><span style="letter-spacing:0.058px">Markdown</span><span style="letter-spacing:1.358px"> </span>转换为其它格式</div><div class="cd">批量将<span style="letter-spacing:0.110px"> Markdown </span>转换为<span style="letter-spacing:-0.050px"> docx</span>、<span style="letter-spacing:0.287px">pdf </span>等格式</div><div class="bdg">新</div></div>
</div>
</body>
</html>
